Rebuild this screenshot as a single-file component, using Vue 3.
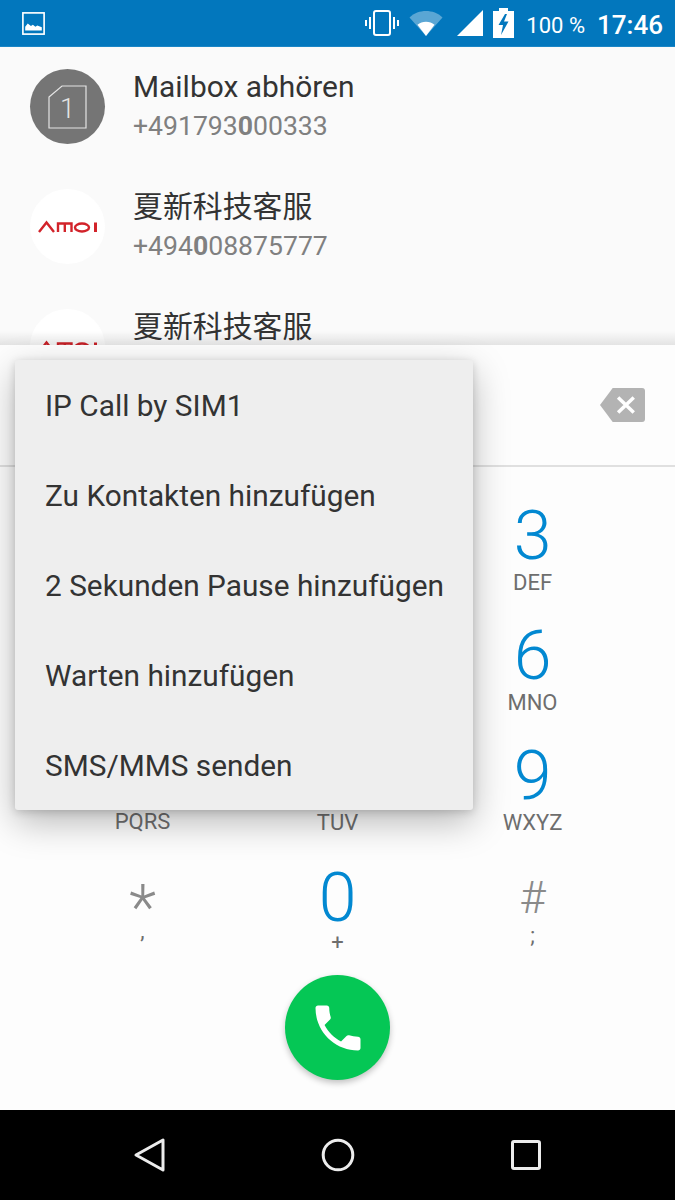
<script setup>
const contacts = [
  { id: 1, name: 'Mailbox abhören', pre: '+491793', hit: '0', post: '00333', kind: 'sim' },
  { id: 2, name: '夏新科技客服', pre: '+494', hit: '0', post: '08875777', kind: 'amoi' },
  // the number of this row is behind the dialer panel
  { id: 3, name: '夏新科技客服', kind: 'amoi' }
]

// keys under the popup menu show nothing, they only hold their grid cell
const keys = [
  { d: '', l: '' }, { d: '', l: '' }, { d: '3', l: 'DEF' },
  { d: '', l: '' }, { d: '', l: '' }, { d: '6', l: 'MNO' },
  { d: '', l: 'PQRS', cls: 'pqrs' }, { d: '', l: 'TUV' }, { d: '9', l: 'WXYZ' },
  { d: '*', l: ',', cls: 'star' }, { d: '0', l: '+', cls: 'zero' }, { d: '#', l: ';', cls: 'hash' }
]

const menu = [
  'IP Call by SIM1',
  'Zu Kontakten hinzufügen',
  '2 Sekunden Pause hinzufügen',
  'Warten hinzufügen',
  'SMS/MMS senden'
]
</script>

<template>
  <div class="phone">
    <header class="status">
      <svg class="st-pic" width="23" height="23" viewBox="0 0 18 18">
        <rect x="0.7" y="0.7" width="16.6" height="16.6" fill="none" stroke="#fff" stroke-width="1.3" />
        <path d="M2.500 14.500v-3l2-2.500 2.500 2 1.500-1 2 1.500 1.500-1 3.500 1.500v2.500z" fill="#fff" />
      </svg>
      <div class="st-right">
        <svg width="34" height="26" viewBox="0 0 34 26" class="st-vib">
          <rect x="9" y="1" width="16" height="24" rx="2" fill="none" stroke="#fff" stroke-width="2" />
          <path d="M5 7v12M1 10v6M29 7v12M33 10v6" stroke="#fff" stroke-width="2" fill="none" />
        </svg>
        <svg width="34" height="26" viewBox="0 0 34 26" class="st-wifi">
          <path d="M0.500 7.500C5 3 11 1 17 1s12 2 16.500 6.500L17 26z" fill="#fff" fill-opacity="0.35" />
          <path d="M8.500 14.800C10.800 12.800 13.800 11.700 17 11.700s6.200 1.100 8.500 3.100L17 26z" fill="#fff" />
        </svg>
        <svg width="26" height="26" viewBox="0 0 26 26" class="st-sig">
          <path d="M26 0v26H0z" fill="#fff" />
        </svg>
        <svg width="21" height="30" viewBox="0 0 21 30" class="st-bat">
          <path d="M6 0h9v3h6v27H0V3h6z" fill="#fff" />
          <path d="M12 6L5.500 17h4.500L8 27l7.500-13.500H11l3-7.500z" fill="#0277bd" />
        </svg>
        <span class="st-pct">100 %</span>
        <span class="st-time">17:46</span>
      </div>
    </header>

    <section class="list">
      <div v-for="c in contacts" :key="c.id" class="row">
        <div class="avatar" :class="c.kind">
          <svg v-if="c.kind === 'sim'" width="75" height="75" viewBox="0 0 75 75">
            <path d="M19 28L32 17H56V59H19z" fill="none" stroke="#e4e4e4" stroke-width="1.200" />
            <text x="37.500" y="49" text-anchor="middle" class="sim-num">1</text>
          </svg>
          <svg v-else width="75" height="75" viewBox="0 0 75 75">
            <path d="M9 43L16.500 33.500 24 43" fill="none" stroke="#d2232a" stroke-width="2.400" />
            <path d="M28 43V34.500h13.500V43M34.800 34.500V43" fill="none" stroke="#d2232a" stroke-width="2.400" />
            <ellipse cx="52" cy="38.500" rx="7" ry="4" fill="none" stroke="#d2232a" stroke-width="2.400" />
            <path d="M65.500 33.500v9.500" stroke="#d2232a" stroke-width="3" />
          </svg>
        </div>
        <div class="who">
          <div class="name">{{ c.name }}</div>
          <div v-if="c.pre" class="num">{{ c.pre }}<b>{{ c.hit }}</b>{{ c.post }}</div>
        </div>
      </div>
    </section>

    <section class="dialer">
      <div class="entry">
        <svg width="45" height="34" viewBox="0 0 46 34" preserveAspectRatio="none">
          <path d="M13 0h30a3 3 0 0 1 3 3v28a3 3 0 0 1-3 3H13L0 17z" fill="#b3b3b3" />
          <path d="M18.500 9.500L34.500 24.500M34.500 9.500L18.500 24.500" stroke="#fff" stroke-width="3.600" />
        </svg>
      </div>
      <div class="pad">
        <div v-for="(k, i) in keys" :key="i" class="key">
          <span class="digit" :class="k.cls">{{ k.d }}</span>
          <span class="letters" :class="k.cls">{{ k.l }}</span>
        </div>
      </div>
      <div class="call-wrap">
        <button class="call">
          <svg width="60" height="60" viewBox="0 0 24 24">
            <path d="M6.620 10.790c1.440 2.830 3.760 5.140 6.590 6.590l2.200-2.200c.27-.27.67-.36 1.020-.24 1.120.37 2.330.57 3.570.57.550 0 1 .45 1 1V20c0 .55-.45 1-1 1C10.610 21 3 13.390 3 4c0-.55.45-1 1-1h3.500c.55 0 1 .45 1 1 0 1.250.2 2.450.57 3.570.11.350.03.740-.25 1.020l-2.200 2.200z" fill="#fff" />
          </svg>
        </button>
      </div>

      <ul class="menu">
        <li v-for="m in menu" :key="m">{{ m }}</li>
      </ul>
    </section>

    <nav class="nav">
      <svg width="34" height="36" viewBox="0 0 34 36">
        <path d="M30 3v30L3 18z" fill="none" stroke="#ececec" stroke-width="3" stroke-linejoin="round" />
      </svg>
      <svg width="34" height="34" viewBox="0 0 34 34">
        <circle cx="17" cy="17" r="14.800" fill="none" stroke="#ececec" stroke-width="3" />
      </svg>
      <svg width="30" height="30" viewBox="0 0 30 30">
        <rect x="1.500" y="1.500" width="27" height="27" rx="1.500" fill="none" stroke="#ececec" stroke-width="3" />
      </svg>
    </nav>
  </div>
</template>

<style scoped>
.phone {
  width: 675px;
  height: 1200px;
  display: flex;
  flex-direction: column;
  overflow: hidden;
  font-family: Roboto, "Noto Sans CJK SC", sans-serif;
  background: #fafafa;
}

.status {
  height: 47px;
  flex: none;
  box-sizing: border-box;
  background: #0277bd;
  border-bottom: 1px solid #1a86c6;
  display: flex;
  align-items: center;
  justify-content: space-between;
  padding: 0 12px 0 22px;
  color: #fff;
}

.st-right {
  display: flex;
  align-items: center;
}

.st-vib {
  margin-right: 10px;
}

.st-wifi {
  margin-right: 14px;
}

.st-sig {
  margin-right: 10px;
}

.st-bat {
  margin-bottom: 1px;
}

.st-pct {
  font-size: 22px;
  margin-left: 12px;
  padding-top: 4px;
}

.st-time {
  font-size: 26px;
  font-weight: 500;
  margin-left: 12px;
  padding-top: 3px;
}

.list {
  height: 298px;
  flex: none;
  overflow: hidden;
  background: #fafafa;
  position: relative;
}

.list::after {
  content: '';
  position: absolute;
  left: 0;
  right: 0;
  bottom: 0;
  height: 14px;
  background: linear-gradient(rgba(0, 0, 0, 0), rgba(0, 0, 0, 0.09));
}

.row {
  height: 120px;
  display: flex;
  align-items: center;
  padding-left: 30px;
  padding-bottom: 1px;
  box-sizing: border-box;
}

.avatar {
  width: 75px;
  height: 75px;
  border-radius: 50%;
  flex: none;
  overflow: hidden;
}

.avatar svg {
  display: block;
}

.avatar.sim {
  background: #757575;
}

.avatar.amoi {
  background: #fff;
}

.sim-num {
  font-size: 27px;
  font-weight: 300;
  fill: #e4e4e4;
}

.who {
  margin-left: 28px;
  height: 77px;
}

.name {
  font-size: 29.900px;
  line-height: 38px;
  color: #333;
}

.num {
  font-size: 26.600px;
  line-height: 39px;
  color: #808080;
}

.num b {
  font-weight: 700;
}

.dialer {
  position: relative;
  flex: 1;
  background: #fdfdfd;
  display: flex;
  flex-direction: column;
}

.entry {
  height: 122px;
  flex: none;
  box-sizing: border-box;
  border-bottom: 2px solid #e0e0e0;
  display: flex;
  align-items: center;
  justify-content: flex-end;
  padding-right: 30px;
}

.pad {
  display: grid;
  grid-template-columns: repeat(3, 195px);
  grid-auto-rows: 120px;
  padding: 0 45px;
  height: 480px;
  flex: none;
}

.key {
  display: flex;
  flex-direction: column;
  align-items: center;
  padding-top: 29px;
  box-sizing: border-box;
}

.digit {
  flex: none;
  font-size: 68px;
  line-height: 80px;
  height: 74px;
  box-sizing: border-box;
  font-weight: 300;
  color: #0288d1;
}

.digit.zero {
  padding-top: 2px;
}

.digit.star {
  color: #8a8a8a;
  font-size: 63px;
  padding-top: 12px;
}

.digit.hash {
  color: #8a8a8a;
  font-size: 45px;
  padding-top: 2px;
}

.letters {
  flex: none;
  font-size: 22px;
  line-height: 26px;
  color: #6e6e6e;
}

.letters.pqrs {
  margin-top: -1px;
}

.letters.star {
  margin-top: -12px;
}

.letters.hash {
  margin-top: -7px;
}

.call-wrap {
  flex: none;
  display: flex;
  justify-content: center;
  margin-top: 28px;
}

.call {
  width: 105px;
  height: 105px;
  border: none;
  padding: 0;
  border-radius: 50%;
  background: #05c755;
  box-shadow: 0 3px 6px rgba(0, 0, 0, 0.24);
  display: flex;
  align-items: center;
  justify-content: center;
}

.menu {
  position: absolute;
  left: 15px;
  top: 15px;
  width: 458px;
  margin: 0;
  padding: 0;
  list-style: none;
  background: #eeeeee;
  border-radius: 3px;
  box-shadow: 0 12px 36px rgba(0, 0, 0, 0.28), 0 2px 8px rgba(0, 0, 0, 0.16);
}

.menu li {
  height: 90px;
  line-height: 91px;
  padding-left: 30px;
  font-size: 29.800px;
  color: #333;
  white-space: nowrap;
}

.nav {
  height: 90px;
  flex: none;
  background: #000;
  display: grid;
  grid-template-columns: repeat(3, 195px);
  padding: 0 45px;
  justify-items: center;
  align-items: center;
}

.nav svg:first-child {
  margin-left: 14px;
}

.nav svg:last-child {
  margin-right: 14px;
}
</style>

<style>
html, body {
  background: #000;
}
</style>
